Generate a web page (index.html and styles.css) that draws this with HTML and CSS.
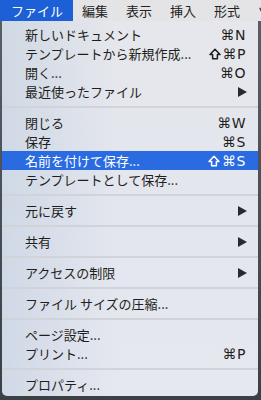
FILE: index.html
```html
<!DOCTYPE html>
<html lang="ja">
<head>
<meta charset="utf-8">
<link rel="stylesheet" href="styles.css">
</head>
<body>
<div class="menubar">
  <span class="mb-item active">ファイル</span>
  <span class="mb-item">編集</span>
  <span class="mb-item">表示</span>
  <span class="mb-item">挿入</span>
  <span class="mb-item">形式</span>
  <span class="mb-item">ツ</span>
</div>
<div class="menu">
  <div class="row"><span class="label">新しいドキュメント</span><span class="sc">⌘N</span></div>
  <div class="row"><span class="label">テンプレートから新規作成...</span><svg class="shift" viewBox="0 0 12 12"><path d="M6 1.2 L11 6.4 H8.4 V10.8 H3.6 V6.4 H1 Z"/></svg><span class="sc">⌘P</span></div>
  <div class="row"><span class="label">開く...</span><span class="sc">⌘O</span></div>
  <div class="row"><span class="label">最近使ったファイル</span><span class="arrow"></span></div>
  <div class="sep"></div>
  <div class="row"><span class="label">閉じる</span><span class="sc">⌘W</span></div>
  <div class="row"><span class="label">保存</span><span class="sc">⌘S</span></div>
  <div class="row selected"><span class="label">名前を付けて保存...</span><svg class="shift" viewBox="0 0 12 12"><path d="M6 1.2 L11 6.4 H8.4 V10.8 H3.6 V6.4 H1 Z"/></svg><span class="sc">⌘S</span></div>
  <div class="row"><span class="label">テンプレートとして保存...</span></div>
  <div class="sep"></div>
  <div class="row"><span class="label">元に戻す</span><span class="arrow"></span></div>
  <div class="sep"></div>
  <div class="row"><span class="label">共有</span><span class="arrow"></span></div>
  <div class="sep"></div>
  <div class="row"><span class="label">アクセスの制限</span><span class="arrow"></span></div>
  <div class="sep"></div>
  <div class="row"><span class="label">ファイル サイズの圧縮...</span></div>
  <div class="sep"></div>
  <div class="row"><span class="label">ページ設定...</span></div>
  <div class="row"><span class="label">プリント...</span><span class="sc">⌘P</span></div>
  <div class="sep"></div>
  <div class="row"><span class="label">プロパティ...</span></div>
</div>
</body>
</html>
```

FILE: styles.css
```css
html, body {
  margin: 0;
  padding: 0;
}
body {
  width: 261px;
  height: 400px;
  overflow: hidden;
  background: linear-gradient(to bottom, #5a5f68, #3b3f46);
  font-family: "Noto Sans CJK JP", "Noto Sans", sans-serif;
  font-size: 13px;
  color: #1e1e20;
}
.menubar {
  display: flex;
  height: 21px;
  background: #e4e4e7;
  white-space: nowrap;
  overflow: hidden;
}
.mb-item {
  display: flex;
  align-items: center;
  padding: 0 9px;
  line-height: 21px;
  color: #222;
}
.mb-item.active {
  padding: 0 10px 0 11px;
  background: #1c5fd6;
  color: #fff;
}
.menu {
  margin-left: 2px;
  width: 256px;
  padding: 4px 0 2px;
  border-radius: 0 0 5px 5px;
  background:
    linear-gradient(to right, rgba(190, 205, 222, 0.55) 0%, rgba(226, 230, 238, 0) 45%),
    linear-gradient(to bottom, #e6e7ec 0%, #e3e6ee 50%, #e6e8f0 100%);
}
.row {
  display: flex;
  align-items: center;
  height: 19px;
  padding: 0 12px 0 23px;
  white-space: nowrap;
}
.label {
  flex: 1;
}
.sc {
  font-family: "DejaVu Sans", "Noto Sans CJK JP", sans-serif;
  font-size: 14px;
  letter-spacing: 0.5px;
  color: #1e1e20;
}
.shift {
  width: 12px;
  height: 12px;
  margin-right: 2px;
  fill: none;
  stroke: #1e1e20;
  stroke-width: 1.5;
  stroke-linejoin: round;
}
.arrow {
  width: 0;
  height: 0;
  border-left: 9px solid #2a2a2e;
  border-top: 5px solid transparent;
  border-bottom: 5px solid transparent;
  margin-right: -1px;
}
.selected {
  background: #2a6be2;
  color: #fff;
}
.selected .sc {
  color: #fff;
}
.selected .shift {
  stroke: #fff;
}
.sep {
  height: 12px;
  display: flex;
  align-items: center;
}
.sep::before {
  content: "";
  flex: 1;
  height: 2px;
  background: #d0d3da;
}
```
